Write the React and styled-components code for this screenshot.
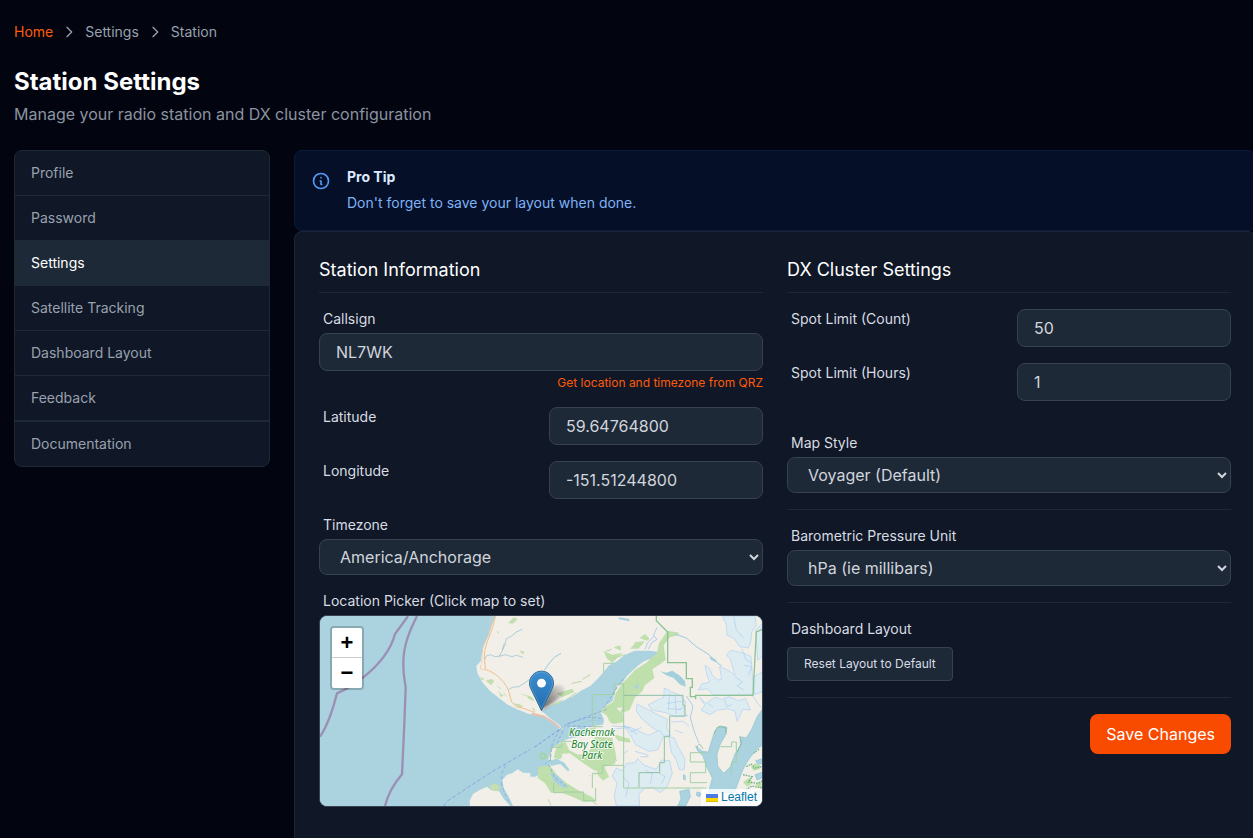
import React, { useState } from 'react'
import styled, { createGlobalStyle } from 'styled-components'

const GlobalStyle = createGlobalStyle`
*{
    box-sizing: border-box;
}
html{
    scrollbar-width: none;
}
body{
    margin: 0;
    background-color: #02050f;
    color: #d1d5dc;
    font-family: Inter, sans-serif;
    font-size: 14px;
    line-height: 20px;
}
button, input, select{
    font-family: inherit;
}
`

const Page = styled.div`
    padding: 22px 0 0 14px;
    overflow-x: clip;
`

const Breadcrumb = styled.nav`
    display: flex;
    align-items: center;
    gap: 8px;
    margin-bottom: 24px;
    color: #99a1af;

    a{
        color: inherit;
        text-decoration: none;
    }
    a.home{
        color: #ff5a0a;
    }
`

const Title = styled.h1`
    margin: 0 0 4px;
    color: #fff;
    font-size: 24px;
    font-weight: 700;
    line-height: 32px;
`

const Subtitle = styled.p`
    margin: 0 0 24px;
    color: #8b93a1;
    font-size: 16px;
    line-height: 24px;
`

const Layout = styled.div`
    display: flex;
    align-items: flex-start;
    gap: 24px;
`

const Sidebar = styled.nav`
    flex: 0 0 256px;
    background-color: #101726;
    border: 1px solid #1f2836;
    border-radius: 8px;
    overflow: hidden;
`

const SideLink = styled.a`
    display: block;
    padding: 12px 16px;
    color: ${(p) => (p.$active ? '#fff' : '#99a1af')};
    background-color: ${(p) => (p.$active ? '#1e2938' : 'transparent')};
    border-bottom: 1px solid #1e2938;
    text-decoration: none;

    &:last-child{
        border-top: 1px solid #1e2938;
        border-bottom: none;
    }
`

/* runs a hair past the window on the right */
const Main = styled.main`
    flex: 1;
    min-width: 0;
    margin-right: -3px;
`

const Tip = styled.div`
    display: flex;
    align-items: flex-start;
    gap: 16px;
    padding: 16px;
    background-color: #050f28;
    border: 1px solid #0b1a3b;
    border-radius: 8px;
    color: #7fb2f5;

    svg{
        flex: none;
        margin-top: 4px;
        color: #519af5;
    }
    h3{
        margin: 0 0 4px;
        color: #dbeafe;
        font-size: 14px;
        font-weight: 700;
    }
    p{
        margin: 0;
        line-height: 23px;
    }
`

const Card = styled.form`
    display: grid;
    grid-template-columns: 1fr 1fr;
    align-items: start;
    gap: 24px;
    padding: 24px 24px 48px;
    background-color: #101726;
    border: 1px solid #1e2735;
    border-radius: 8px;
`

const Column = styled.section`
    display: flex;
    flex-direction: column;
    gap: 16px;
    min-width: 0;
`

const SectionTitle = styled.h2`
    margin: 0;
    padding-bottom: 8px;
    border-bottom: 1px solid #1e2735;
    color: #fff;
    font-size: 18px;
    font-weight: 400;
    line-height: 28px;
`

const Field = styled.div`
    display: flex;
    flex-direction: column;
    gap: ${(p) => (p.$loose ? 8 : 4)}px;
    padding-top: ${(p) => (p.$spaced ? 16 : 0)}px;
`

const FieldRow = styled.div`
    display: grid;
    grid-template-columns: 1fr 1fr;
    align-items: start;
    gap: 16px;
`

const Label = styled.label`
    padding-left: 4px;
    color: #d8dce3;
`

const LabelText = styled(Label).attrs({ as: 'span' })``

const Input = styled.input`
    width: 100%;
    height: 38px;
    padding: 6px 16px;
    background-color: #1e2938;
    border: 1px solid #364153;
    border-radius: 8px;
    outline: none;
    color: #d1d5dc;
    font-size: 16px;
    line-height: 24px;
`

const Select = styled.select`
    width: 100%;
    height: 36px;
    padding: 0 0 0 16px;
    background-color: #1e2938;
    border: 1px solid #364153;
    border-radius: 8px;
    outline: none;
    color: #d1d5dc;
    font-size: 16px;
`

const LookupButton = styled.button`
    align-self: flex-end;
    padding: 0;
    background: none;
    border: none;
    color: #ff5a0a;
    cursor: pointer;
    font-size: 12px;
    line-height: 16px;
`

const Divider = styled.hr`
    width: 100%;
    height: 1px;
    margin: 0;
    border: none;
    background-color: #1e2735;
`

const ResetButton = styled.button`
    align-self: flex-start;
    padding: 8px 16px;
    background-color: #1e2938;
    border: 1px solid #364153;
    border-radius: 4px;
    color: #d8dce3;
    cursor: pointer;
    font-size: 12px;
    line-height: 16px;
`

const SaveButton = styled.button`
    align-self: flex-end;
    padding: 8px 16px;
    background-color: #f94b00;
    border: none;
    border-radius: 8px;
    color: #fff;
    cursor: pointer;
    font-size: 16px;
    line-height: 24px;
`

const MapBox = styled.div`
    position: relative;
    height: 192px;
    border: 1px solid #364153;
    border-radius: 8px;
    background-color: #aad3df;
    overflow: hidden;

    > svg{
        display: block;
        width: 100%;
        height: 100%;
    }
`

const ZoomControl = styled.div`
    position: absolute;
    top: 10px;
    left: 10px;
    display: flex;
    flex-direction: column;
    border: 2px solid rgba(0,0,0,0.2);
    border-radius: 4px;
    background-clip: padding-box;
`

const ZoomButton = styled.button`
    width: 30px;
    height: 30px;
    padding: 0;
    background-color: #fff;
    border: none;
    color: #000;
    cursor: pointer;
    font-family: "Liberation Sans", sans-serif;
    font-size: 22px;
    font-weight: 700;
    line-height: 30px;

    &:first-child{
        border-bottom: 1px solid #ccc;
        border-radius: 2px 2px 0 0;
    }
    &:last-child{
        border-radius: 0 0 2px 2px;
    }
`

const Attribution = styled.a`
    position: absolute;
    right: 0;
    bottom: 0;
    display: flex;
    align-items: center;
    gap: 3px;
    padding: 0 5px;
    background-color: rgba(255,255,255,0.8);
    color: #0078a8;
    font-family: "Liberation Sans", Arial, sans-serif;
    font-size: 12px;
    line-height: 17px;
    text-decoration: none;
`

const Chevron = () => (
    <svg width="16" height="16" viewBox="0 0 24 24" fill="none" stroke="currentColor" strokeWidth="2" strokeLinecap="round" strokeLinejoin="round">
        <path d="M9 5l7 7-7 7" />
    </svg>
)

const InfoIcon = () => (
    <svg width="20" height="20" viewBox="0 0 24 24" fill="none" stroke="currentColor" strokeWidth="2" strokeLinecap="round" strokeLinejoin="round">
        <path d="M13 16h-1v-4h-1m1-4h.01M21 12a9 9 0 11-18 0 9 9 0 0118 0z" />
    </svg>
)

const Flag = () => (
    <svg width="12" height="8" viewBox="0 0 12 8">
        <path fill="#4C7BE1" d="M0 0h12v4H0z" />
        <path fill="#FFD500" d="M0 4h12v3H0z" />
        <path fill="#E0BC00" d="M0 7h12v1H0z" />
    </svg>
)

const CoastMap = () => (
    <svg viewBox="0 0 1326 570" preserveAspectRatio="xMidYMid slice" role="img" aria-label="Map of Kachemak Bay">
        <defs>
            <linearGradient id="pin" x1="0" y1="0" x2="0" y2="1">
                <stop offset="0" stopColor="#3c8fd0" />
                <stop offset="1" stopColor="#216cad" />
            </linearGradient>
            <linearGradient id="shade" x1="0" y1="1" x2="1" y2="0">
                <stop offset="0" stopColor="#000" stopOpacity="0.65" />
                <stop offset="1" stopColor="#000" stopOpacity="0.04" />
            </linearGradient>
            <filter id="soft" x="-30%" y="-30%" width="160%" height="160%">
                <feGaussianBlur stdDeviation="5" />
            </filter>
        </defs>
        <rect width="1326" height="570" fill="#aad3df" />

        {/* west side: borough boundaries, then the tip of the peninsula */}
        <g transform="translate(-15 -18)">
            <g fill="none" stroke="#9b8fb4" strokeWidth="7" strokeLinejoin="round">
                <path d="M279 18L262 42L240 72C228 118 200 158 145 202L95 236L66 250C54 298 40 344 15 380" />
                <path d="M306 18C284 62 264 108 265 162L266 190L272 232L268 340L261 493C236 522 220 548 210 588" />
            </g>
            <path fill="#f2efe9" d="M541 18L530 48L520 76L506 108L499 140L498 152L484 168L487 188L500 214L524 242L552 264L578 284L606 298L640 311L668 317L700 323L700 18Z" />
            <path fill="#f2efe9" d="M465 588L464 572L474 552L494 540L516 530L528 540L552 544L566 566L586 588ZM594 588L582 562L566 534L562 510L576 494L592 490L608 478L624 488L650 490L664 504L680 510L720 520L720 588Z" />
            <path fill="#c5deb0" d="M522 528L540 520L556 530L550 544L534 542ZM494 200L508 206L502 212ZM512 212L530 206L538 214L528 226ZM548 240L556 250L566 256L558 262ZM594 280L612 292L626 290L612 282ZM634 254L652 262L658 274L640 266ZM648 292L668 300L660 306ZM580 38L596 22L608 26L592 42ZM615 122L626 124L628 132L618 130ZM545 62L552 66L550 72Z" />
            <path fill="#b7dca3" d="M676 434L690 424V450L680 448ZM666 498L690 488V518L674 514Z" />
            <path fill="none" stroke="#b4d9a4" strokeWidth="2" d="M594 38l10-8M548 230l10 6M620 252l14 6M566 248l8 12" />
            <g fill="none" stroke="#8dbdcf" strokeWidth="2">
                <path d="M508 150L514 138L526 134L540 140L556 138L572 134L590 140L604 136L624 142M552 140L562 122L570 104L574 86L590 78L604 66L622 58M562 120L568 100" />
                <path d="M582 238L592 232L612 230L630 218L644 208" />
            </g>
            <g fill="none" stroke="#f0bd88" strokeWidth="3">
                <path d="M541 18C534 66 508 100 508 140L511 178C536 186 566 208 580 240L590 276L604 290L628 296L656 306L700 316" />
                <path d="M530 18L524 70L503 112L500 160" stroke="#efc7a0" strokeWidth="2" />
                <path d="M498 164L496 176L510 180" strokeWidth="2" />
            </g>
            <g fill="none" stroke="#8aa6e4" strokeWidth="3" strokeDasharray="12 6">
                <path d="M386 588L396 574L520 492L690 392" />
                <path d="M572 464L560 492L560 524L570 552L584 582" strokeWidth="2" />
            </g>
        </g>

        {/* east side: the bay, the state park and the ice field */}
        <g transform="translate(645 -18)">
            <path fill="#f2efe9" d="M0 18H690V588H30L14 560L18 520L0 500L20 482L42 470L38 440L48 410L78 396L86 368L60 346L28 326L0 318Z" />
            <path fill="#aad3df" d="M20 303L50 286L84 272L112 260L138 242L166 228L188 206L206 186L222 166L246 154L270 134L300 122L344 122L372 126L360 142L330 152L312 164L292 182L272 202L262 218L248 226L238 252L232 274L210 288L196 306L208 326L204 344L176 348L150 354L160 366L132 380L100 386L74 398L48 420L40 448L46 470L22 488L0 500L-14 500V312L30 320L72 356L84 358L70 342L44 324Z" />

            <g fill="#bfdfac">
                <path d="M398 62L432 68L428 76L404 82L386 106L392 150L376 162L352 178L358 204L330 226L322 244L300 262L284 300L262 308L268 336L234 342L216 330L196 304L210 290L234 276L242 250L262 220L276 206L300 180L334 158L366 128L372 100Z" />
                <path d="M66 402L92 396L102 420L130 434L160 430L180 380L232 384L240 420L244 444L240 462L208 470L222 500L204 512L186 492L162 498L146 470L112 444L88 430L76 448L56 444Z" />
                <path d="M10 470L44 466L66 494L96 520L132 542L170 560L186 574L146 576L112 560L78 548L48 548L30 520L8 504Z" />
                <path d="M232 372L284 386L286 398L250 392ZM160 356L184 352L178 366ZM66 250L112 236L118 246L80 262ZM206 124L232 134L264 128L250 140L232 158L216 146ZM236 112L256 106L258 122ZM314 84L330 72L344 86L336 92ZM286 116L302 96L330 94L310 116ZM50 284L84 268L72 282Z" />
                <path d="M648 470L660 460L676 466V476L656 482ZM624 516L646 502L652 520L636 530ZM660 524L680 514V536ZM652 546L676 540L672 552Z" />
            </g>
            <circle cx="24" cy="438" r="8" fill="none" stroke="#a6d29b" strokeWidth="5" />
            <path fill="none" stroke="#b9d8a3" strokeWidth="3" d="M110 220l30-6M142 208l24-14M96 268l28-20M212 124l18-6M230 146l40-12M20 506l30 12M40 568l8 18M170 572l16 12M236 444l10 8" />

            {/* bare ground inside the park */}
            <path fill="#f2efe9" d="M56 478L74 458L96 470L104 494L112 514L92 516L72 500ZM78 432L104 430L140 456L172 478L190 486L170 498L132 488L104 460ZM200 306L216 318L228 344L206 330ZM244 294L262 292L256 306Z" />
            <path fill="#aad3df" d="M40 452L66 446L88 458L104 480L98 484L76 462L48 468ZM44 486L70 498L98 532L86 534L58 516ZM262 196l16-10l-6 20ZM296 232l16-12l-4 18Z" />

            {/* ice */}
            <g fill="#ddecf0" stroke="#b0cff5" strokeWidth="2" strokeLinejoin="round">
                <path d="M562 18L574 44L576 76L596 84L614 110L640 114L648 92L650 66L664 46L660 18Z" />
                <path d="M510 166L524 176L532 196L548 210L560 208L554 170L582 182L600 196L586 146L574 136L588 120L628 130L648 140L656 252L566 256L534 254L516 236L490 240L500 222L524 216L516 196Z" />
                <path d="M662 60L682 40V140L668 150ZM656 200L682 186V246L658 254Z" />
                <path d="M494 262L512 280L540 262L560 268L582 260L610 272L632 266L646 300L624 298L606 334L600 304L578 296L548 300L524 314L498 300L510 286Z" />
                <path d="M306 282L322 290L360 310L398 328L394 350L406 376L388 378L348 350L318 324L304 302Z" />
                <path d="M388 234L410 246L436 256L452 276L446 306L458 318L420 320L392 308L350 300L340 284L386 262Z" />
                <path d="M266 346L300 358L340 376L374 360L386 378L368 420L340 424L302 404L288 378Z" />
                <path d="M402 380L418 384L430 412L450 446L448 478L434 480L424 450L410 428L404 400Z" />
                <path d="M244 474L262 482L276 460L300 458L308 446L328 466L364 478L380 450L404 452L412 490L396 530L376 548L352 532L330 534L312 552L314 588L244 588L238 556L246 520L232 498Z" />
            </g>
            <g fill="none" stroke="#aacbf3" strokeWidth="2">
                <path d="M230 348L270 350L306 372M286 366L320 352M210 360L286 352" />
                <path d="M652 256L668 280L682 296M408 336L444 334L462 348M444 370L420 360M430 300L450 290M330 480L352 492L346 520M264 500L282 520L272 560M370 488L390 500L380 520M266 430L280 422M300 424L336 434L340 440L316 440" />
                <path d="M600 200L622 216L606 228L626 240M628 166L650 170L640 196M596 20L604 60L626 84M620 116L634 150L650 160" />
                <path d="M404 250L400 300M420 256L424 312M396 280L440 274M398 296L438 298M568 268L576 290L590 284M520 280L534 292" />
            </g>

            {/* rivers and lakes */}
            <g fill="none" stroke="#9cccdd" strokeWidth="3">
                <path d="M366 52L356 76L366 88L350 98L340 118M358 78L338 98L330 118" stroke="#94b9e8" strokeWidth="2" />
                <path d="M420 72L454 84L484 110L522 134L544 156L560 168" />
                <path d="M28 180L44 158L58 142L78 130" />
                <path d="M120 350L160 332L200 332" strokeWidth="2" />
                <path d="M454 258L474 288L466 322L478 366L492 400" stroke="#a9cfe8" />
            </g>
            <path fill="#a3cfdd" d="M376 184L394 188L412 182L436 198L450 214L452 230L436 224L416 204L394 196ZM250 22L282 26L284 34L252 28ZM524 138l20 12v8l-18-10ZM444 492l8 4v16l-8-4Z" />

            {/* fjords */}
            <g fill="#aad3df" stroke="#8fc3cf" strokeWidth="2">
                <path d="M482 408L502 424L520 426L530 392L540 362L556 348L576 352L572 374L556 402L546 432L548 468L566 490L586 470L600 432L616 406L616 380L634 384L652 354L666 320L690 288V400L664 418L640 450L624 478L612 510L598 548L520 548L532 504L514 468L504 438L488 422Z" />
                <path d="M662 452L690 444V460L668 462ZM660 494L690 484V500L666 510ZM434 544L462 538L466 560L452 588H428L438 566ZM486 546l14 4l-6 10l-10-4Z" />
            </g>
            <g fill="none" stroke="#74b38b" strokeWidth="3" strokeDasharray="5 3">
                <path d="M538 370L548 350L572 352L574 372M504 416L494 402L484 412M614 380L620 398L606 428" />
                <path d="M672 418L656 430M634 470L648 462L660 474L690 468M624 494L652 500L640 516L668 520L690 508M632 540L650 528L682 534" strokeWidth="4" />
            </g>

            {/* park borders */}
            <g fill="none" stroke="#a3cfa6" strokeWidth="3" strokeLinejoin="miter">
                <path d="M364 18V32L398 66V158H454V206H472V232H466V260H482V268V256H654L664 66L682 58" stroke="#8cc392" strokeWidth="4" />
                <path d="M266 256H444V286H450V318H404V380H388V458H374V488H312V532" stroke="#8fc0a4" />
                <path d="M206 188V160H238M238 222H266V534H514" />
                <path d="M172 350V254H238V222M172 350H204M46 456V412H80V394H110M172 534V490H202V466H266M84 546H146V572H182V534" />
                <path d="M512 428H466V456H512V488H466V518H516M556 410H590V396H604V456H590L588 492" />
                <path d="M56 520V548H84" />
            </g>

            {/* ferry lines */}
            <g fill="none" stroke="#7f97e0" strokeWidth="2" strokeDasharray="10 6">
                <path d="M-2 412L74 358" strokeWidth="3" />
                <path d="M74 358L96 342L220 296M96 342L160 322L206 326M74 358L52 400L46 450L30 462M84 362L66 400M266 206L238 244L206 296M40 462L60 504L96 530M96 348L170 350" />
            </g>
            <path fill="none" stroke="#ddc3bd" strokeWidth="7" d="M-10 312L26 320L56 338L74 354" />
            <path fill="none" stroke="#f0bd88" strokeWidth="2" d="M-10 310L20 318" />

            <g fontFamily='"Noto Sans", sans-serif' fontStyle="italic" fontSize="30" textAnchor="middle" fill="#15832c" stroke="#fff" strokeOpacity="0.75" strokeWidth="6" paintOrder="stroke" strokeLinejoin="round">
                <text x="171" y="377">Kachemak</text>
                <text x="171" y="413">Bay State</text>
                <text x="171" y="448">Park</text>
            </g>
        </g>

        {/* marker */}
        <path filter="url(#soft)" fill="url(#shade)" d="M665 282L686 222C706 202 726 204 732 214C738 230 712 254 690 266Z" />
        <g transform="translate(627 164) scale(3)">
            <path fill="url(#pin)" stroke="#2e6c97" strokeWidth="1" d="M12.5 .5C5.8 .5 .5 5.9 .5 12.5c0 2.6.8 4.6 2 6.9L12.5 40l10-20.6c1.2-2.3 2-4.3 2-6.9C24.5 5.9 19.2 .5 12.5 .5z" />
            <path fill="none" stroke="#fff" strokeOpacity="0.15" strokeWidth="1" d="M12.5 1.5C6.4 1.5 1.5 6.4 1.5 12.5c0 2.3.8 4.2 1.9 6.4L12.5 37.6l9.1-18.7c1.1-2.2 1.9-4.1 1.9-6.4C23.500 6.400 18.600 1.500 12.500 1.500z" />
            <circle cx="12.5" cy="12.5" r="4.4" fill="#fff" />
        </g>
    </svg>
)

const links = ['Profile', 'Password', 'Settings', 'Satellite Tracking', 'Dashboard Layout', 'Feedback', 'Documentation']

const App = () => {

    const [callsign,setcallsign]=useState('NL7WK')
    const [lat,setlat]=useState('59.64764800')
    const [lng,setlng]=useState('-151.51244800')
    const [count,setcount]=useState('50')
    const [hours,sethours]=useState('1')

    const save=(e)=>{
        e.preventDefault()
    }

  return (
    <Page>
        <GlobalStyle />
        <Breadcrumb aria-label="Breadcrumb">
            <a className="home" href="#home">Home</a>
            <Chevron />
            <a href="#settings">Settings</a>
            <Chevron />
            <span>Station</span>
        </Breadcrumb>
        <Title>Station Settings</Title>
        <Subtitle>Manage your radio station and DX cluster configuration</Subtitle>

        <Layout>
            <Sidebar>
                {links.map((name)=>(
                    <SideLink key={name} href="#" $active={name==='Settings'}>{name}</SideLink>
                ))}
            </Sidebar>

            <Main>
                <Tip>
                    <InfoIcon />
                    <div>
                        <h3>Pro Tip</h3>
                        <p>Don't forget to save your layout when done.</p>
                    </div>
                </Tip>

                <Card onSubmit={save}>
                    <Column>
                        <SectionTitle>Station Information</SectionTitle>
                        <Field>
                            <Label htmlFor="callsign">Callsign</Label>
                            <Input id="callsign" type="text" value={callsign} onChange={(e)=>setcallsign(e.target.value)} />
                            <LookupButton type="button">Get location and timezone from QRZ</LookupButton>
                        </Field>
                        <FieldRow>
                            <Label htmlFor="lat">Latitude</Label>
                            <Input id="lat" type="text" value={lat} onChange={(e)=>setlat(e.target.value)} />
                        </FieldRow>
                        <FieldRow>
                            <Label htmlFor="lng">Longitude</Label>
                            <Input id="lng" type="text" value={lng} onChange={(e)=>setlng(e.target.value)} />
                        </FieldRow>
                        <Field>
                            <Label htmlFor="timezone">Timezone</Label>
                            <Select id="timezone">
                                <option>America/Anchorage</option>
                            </Select>
                        </Field>
                        <Field>
                            <LabelText>Location Picker (Click map to set)</LabelText>
                            <MapBox>
                                <CoastMap />
                                <ZoomControl>
                                    <ZoomButton type="button" aria-label="Zoom in">+</ZoomButton>
                                    <ZoomButton type="button" aria-label="Zoom out">−</ZoomButton>
                                </ZoomControl>
                                <Attribution href="#leaflet"><Flag />Leaflet</Attribution>
                            </MapBox>
                        </Field>
                    </Column>

                    <Column>
                        <SectionTitle>DX Cluster Settings</SectionTitle>
                        <FieldRow>
                            <Label htmlFor="count">Spot Limit (Count)</Label>
                            <Input id="count" type="text" inputMode="numeric" value={count} onChange={(e)=>setcount(e.target.value)} />
                        </FieldRow>
                        <FieldRow>
                            <Label htmlFor="hours">Spot Limit (Hours)</Label>
                            <Input id="hours" type="text" inputMode="numeric" value={hours} onChange={(e)=>sethours(e.target.value)} />
                        </FieldRow>
                        <Field $spaced>
                            <Label htmlFor="mapstyle">Map Style</Label>
                            <Select id="mapstyle">
                                <option>Voyager (Default)</option>
                            </Select>
                        </Field>
                        <Divider />
                        <Field>
                            <Label htmlFor="pressure">Barometric Pressure Unit</Label>
                            <Select id="pressure">
                                <option>hPa (ie millibars)</option>
                            </Select>
                        </Field>
                        <Divider />
                        <Field $loose>
                            <LabelText>Dashboard Layout</LabelText>
                            <ResetButton type="button">Reset Layout to Default</ResetButton>
                        </Field>
                        <Divider />
                        <SaveButton type="submit">Save Changes</SaveButton>
                    </Column>
                </Card>
            </Main>
        </Layout>
    </Page>
  )
}

export default App
